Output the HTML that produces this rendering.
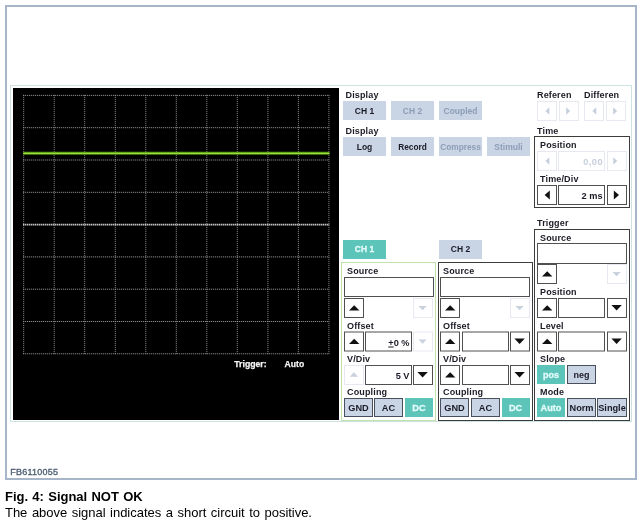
<!DOCTYPE html>
<html>
<head>
<meta charset="utf-8">
<title>Fig. 4: Signal NOT OK</title>
<style>
html,body{margin:0;padding:0;background:#fff;}
body{width:642px;height:527px;position:relative;overflow:hidden;font-family:"Liberation Sans",sans-serif;}
div{position:absolute;box-sizing:border-box;}
.frame{left:5px;top:5px;width:632px;height:475px;border:2px solid #a6b5c8;background:#fff;}
.panel{left:10px;top:85px;width:622px;height:337px;border:1px solid #cfe2e2;background:#fff;}
.scope{left:13px;top:88px;width:326px;height:332px;background:#000;}
.lbl{font-weight:bold;font-size:9px;line-height:10px;color:#1b1b26;white-space:nowrap;letter-spacing:0.15px;}
.btn{background:#c9d5e5;color:#1b1b26;font-weight:bold;font-size:8.5px;line-height:20px;height:19px;text-align:center;white-space:nowrap;}
.btn.dis{color:#8d9db6;}
.btn.on{background:#5cc4b8;color:#e2fbfa;-webkit-text-stroke:0.3px #e2fbfa;}
.btn.bd{border:1px solid #4a4f5c;line-height:18.8px;font-size:8.8px;}
.btn.lo{line-height:21px;}
.box{background:#fff;border:1px solid #505050;height:20px;}
.box.dis{border:1px solid #e6eaf0;}
.grp{border:1px solid #3c3c3c;background:#fff;}
.val{font-weight:bold;font-size:9px;line-height:20.6px;color:#1b1b26;text-align:right;padding-right:1.5px;font-size:9.2px;white-space:nowrap;}
.val.dis{color:#c5cfdc;}
svg{position:absolute;left:0;top:0;display:block;}
.cap1{left:5px;top:489.1px;font-weight:bold;font-size:13px;line-height:15px;color:#000;white-space:nowrap;letter-spacing:-0.03px;word-spacing:0.8px;}
.cap2{left:5px;top:504.6px;font-size:13px;line-height:15px;color:#000;white-space:nowrap;letter-spacing:-0.03px;word-spacing:1px;}
.fb{left:10.3px;top:467px;font-size:9px;font-weight:normal;-webkit-text-stroke:0.35px #4f6074;line-height:10px;color:#4f6074;white-space:nowrap;letter-spacing:0.22px;}
</style>
</head>
<body>
<div id="root" style="left:0;top:0;width:642px;height:527px;will-change:transform;">
<div class="frame"></div>
<div class="panel"></div>
<div class="scope">
<svg width="326" height="332" viewBox="0 0 326 332">
<g stroke-width="1" stroke-dasharray="1 1" fill="none">
<path stroke="#8c8c8c" d="M10.7 6.9V266.3M41.2 6.9V266.3M71.7 6.9V266.3M102.3 6.9V266.3M132.8 6.9V266.3M163.3 6.9V266.3M193.8 6.9V266.3M224.3 6.9V266.3M254.9 6.9V266.3M285.4 6.9V266.3M315.9 6.9V266.3"/>
<path stroke="#a4a4a4" d="M10.2 7.4H316.4M10.2 39.7H316.4M10.2 72.0H316.4M10.2 104.3H316.4M10.2 168.9H316.4M10.2 201.2H316.4M10.2 233.5H316.4M10.2 265.8H316.4"/>
</g>
<path d="M10.2 136.6H316.4" stroke="#f0f0f0" stroke-width="1.6" stroke-dasharray="1.2 0.8" fill="none"/>
<path d="M10.2 65.3H316.4" stroke="#4f9614" stroke-width="3" fill="none"/><path d="M10.2 65.3H316.4" stroke="#98dd3a" stroke-width="1.3" fill="none"/>
</svg>
<div class="lbl" style="left:221.3px;top:271.3px;color:#f4f4f4;-webkit-text-stroke:0.25px #f4f4f4;font-size:8.7px;letter-spacing:0;">Trigger:</div>
<div class="lbl" style="left:271.6px;top:271.3px;color:#f4f4f4;-webkit-text-stroke:0.25px #f4f4f4;font-size:8.6px;letter-spacing:0;">Auto</div>
</div>

<!-- top-left display buttons -->
<div class="lbl" style="left:345.5px;top:90px;">Display</div>
<div class="btn" style="left:343px;top:101px;width:43px;">CH 1</div>
<div class="btn dis" style="left:391px;top:101px;width:43px;">CH 2</div>
<div class="btn dis" style="left:439px;top:101px;width:43px;">Coupled</div>
<div class="lbl" style="left:345.5px;top:126px;">Display</div>
<div class="btn" style="left:343px;top:137px;width:43px;">Log</div>
<div class="btn" style="left:391px;top:137px;width:43px;font-size:8.3px;">Record</div>
<div class="btn dis" style="left:439px;top:137px;width:43px;font-size:8.3px;">Compress</div>
<div class="btn dis" style="left:487px;top:137px;width:43px;">Stimuli</div>

<!-- Referen / Differen -->
<div class="lbl" style="left:537px;top:90px;">Referen</div>
<div class="lbl" style="left:584px;top:90px;">Differen</div>
<div class="box dis" style="left:537px;top:101px;width:20px;"><svg width="18" height="18"><path d="M11.3 5.2v7.6l-3.9-3.8z" fill="#c5cfdc"/></svg></div>
<div class="box dis" style="left:559px;top:101px;width:20px;"><svg width="18" height="18"><path d="M6.2 5.2v7.6l3.9-3.8z" fill="#c5cfdc"/></svg></div>
<div class="box dis" style="left:584px;top:101px;width:20px;"><svg width="18" height="18"><path d="M11.3 5.2v7.6l-3.9-3.8z" fill="#c5cfdc"/></svg></div>
<div class="box dis" style="left:606px;top:101px;width:20px;"><svg width="18" height="18"><path d="M6.2 5.2v7.6l3.9-3.8z" fill="#c5cfdc"/></svg></div>

<!-- Time -->
<div class="lbl" style="left:537px;top:125.6px;">Time</div>
<div class="grp" style="left:534px;top:136px;width:96px;height:72px;"></div>
<div class="lbl" style="left:540px;top:140px;">Position</div>
<div class="box dis" style="left:537px;top:151px;width:20px;"><svg width="18" height="18"><path d="M11.3 5.2v7.6l-3.9-3.8z" fill="#c5cfdc"/></svg></div>
<div class="box dis val dis" style="left:558px;top:151px;width:47px;letter-spacing:0.45px;padding-right:1px;">0,00</div>
<div class="box dis" style="left:607px;top:151px;width:20px;"><svg width="18" height="18"><path d="M5.3 5.2v7.6l3.9-3.8z" fill="#c5cfdc"/></svg></div>
<div class="lbl" style="left:540px;top:174px;">Time/Div</div>
<div class="box" style="left:537px;top:185px;width:20px;"><svg width="18" height="18"><path d="M11.8 4.5v9l-5.2-4.5z" fill="#111"/></svg></div>
<div class="box val" style="left:558px;top:185px;width:47px;">2 ms</div>
<div class="box" style="left:607px;top:185px;width:20px;"><svg width="18" height="18"><path d="M5.8 4.5v9l5.2-4.5z" fill="#111"/></svg></div>

<!-- CH1 panel -->
<div class="btn on" style="left:343px;top:240px;width:43px;line-height:18.6px;">CH 1</div>
<div class="grp" style="left:341px;top:262px;width:95px;height:159px;border-color:#bfe3a8;"></div>
<div class="lbl" style="left:347px;top:266px;">Source</div>
<div class="box" style="left:344px;top:277px;width:90px;"></div>
<div class="box" style="left:344px;top:298px;width:20px;"><svg width="18" height="18"><path d="M4 11.6h10.4l-5.2-5.4z" fill="#111"/></svg></div>
<div class="box dis" style="left:413px;top:298px;width:20px;"><svg width="18" height="18"><path d="M4.5 6.9h8.2l-4.1 4.4z" fill="#c8d1de"/></svg></div>
<div class="lbl" style="left:347px;top:321px;">Offset</div>
<div class="box" style="left:344px;top:331px;transform:translateY(0.5px);width:20px;"><svg width="18" height="18"><path d="M4 11.6h10.4l-5.2-5.4z" fill="#111"/></svg></div>
<div class="box val" style="left:365px;top:331px;transform:translateY(0.5px);width:47px;"><u>+</u>0 %</div>
<div class="box dis" style="left:413px;top:331px;transform:translateY(0.5px);width:20px;"><svg width="18" height="18"><path d="M4.5 6.9h8.2l-4.1 4.4z" fill="#c8d1de"/></svg></div>
<div class="lbl" style="left:347px;top:353.6px;">V/Div</div>
<div class="box dis" style="left:344px;top:365px;width:20px;"><svg width="18" height="18"><path d="M4.8 10.7h8.2l-4.1-4.4z" fill="#c8d1de"/></svg></div>
<div class="box val" style="left:365px;top:365px;width:47px;">5 V</div>
<div class="box" style="left:413px;top:365px;width:20px;"><svg width="18" height="18"><path d="M3.4 6.1h10.4l-5.2 5.4z" fill="#111"/></svg></div>
<div class="lbl" style="left:347px;top:387.4px;">Coupling</div>
<div class="btn bd" style="left:344px;top:398.3px;font-size:9.2px;width:29px;">GND</div>
<div class="btn bd" style="left:374px;top:398.3px;font-size:9.2px;width:29px;">AC</div>
<div class="btn on lo" style="left:405px;top:398.3px;font-size:9.2px;width:28px;">DC</div>

<!-- CH2 panel -->
<div class="btn" style="left:439px;top:240px;width:43px;line-height:18.6px;">CH 2</div>
<div class="grp" style="left:438px;top:262px;width:95px;height:159px;"></div>
<div class="lbl" style="left:443px;top:266px;">Source</div>
<div class="box" style="left:440px;top:277px;width:90px;"></div>
<div class="box" style="left:440px;top:298px;width:20px;"><svg width="18" height="18"><path d="M4 11.6h10.4l-5.2-5.4z" fill="#111"/></svg></div>
<div class="box dis" style="left:510px;top:298px;width:20px;"><svg width="18" height="18"><path d="M4.5 6.9h8.2l-4.1 4.4z" fill="#c8d1de"/></svg></div>
<div class="lbl" style="left:443px;top:321px;">Offset</div>
<div class="box" style="left:440px;top:331px;transform:translateY(0.5px);width:20px;"><svg width="18" height="18"><path d="M4 11.6h10.4l-5.2-5.4z" fill="#111"/></svg></div>
<div class="box" style="left:462px;top:331px;transform:translateY(0.5px);width:47px;"></div>
<div class="box" style="left:510px;top:331px;transform:translateY(0.5px);width:20px;"><svg width="18" height="18"><path d="M3.4 6.1h10.4l-5.2 5.4z" fill="#111"/></svg></div>
<div class="lbl" style="left:443px;top:353.6px;">V/Div</div>
<div class="box" style="left:440px;top:365px;width:20px;"><svg width="18" height="18"><path d="M4 11.6h10.4l-5.2-5.4z" fill="#111"/></svg></div>
<div class="box" style="left:462px;top:365px;width:47px;"></div>
<div class="box" style="left:510px;top:365px;width:20px;"><svg width="18" height="18"><path d="M3.4 6.1h10.4l-5.2 5.4z" fill="#111"/></svg></div>
<div class="lbl" style="left:443px;top:387.4px;">Coupling</div>
<div class="btn bd" style="left:440px;top:398.3px;font-size:9.2px;width:29px;">GND</div>
<div class="btn bd" style="left:471px;top:398.3px;font-size:9.2px;width:29px;">AC</div>
<div class="btn on lo" style="left:501.6px;top:398.3px;font-size:9.2px;width:28px;">DC</div>

<!-- Trigger panel -->
<div class="lbl" style="left:537px;top:218px;">Trigger</div>
<div class="grp" style="left:534px;top:229px;width:96px;height:192px;"></div>
<div class="lbl" style="left:540px;top:233px;">Source</div>
<div class="box" style="left:537px;top:243px;width:90px;height:21px;"></div>
<div class="box" style="left:537px;top:264px;width:20px;"><svg width="18" height="18"><path d="M4 11.6h10.4l-5.2-5.4z" fill="#111"/></svg></div>
<div class="box dis" style="left:607px;top:264px;width:20px;"><svg width="18" height="18"><path d="M4.5 6.9h8.2l-4.1 4.4z" fill="#c8d1de"/></svg></div>
<div class="lbl" style="left:540px;top:287px;">Position</div>
<div class="box" style="left:537px;top:298px;width:20px;"><svg width="18" height="18"><path d="M4 11.6h10.4l-5.2-5.4z" fill="#111"/></svg></div>
<div class="box" style="left:558px;top:298px;width:47px;"></div>
<div class="box" style="left:607px;top:298px;width:20px;"><svg width="18" height="18"><path d="M3.4 6.1h10.4l-5.2 5.4z" fill="#111"/></svg></div>
<div class="lbl" style="left:540px;top:321px;">Level</div>
<div class="box" style="left:537px;top:331px;transform:translateY(0.5px);width:20px;"><svg width="18" height="18"><path d="M4 11.6h10.4l-5.2-5.4z" fill="#111"/></svg></div>
<div class="box" style="left:558px;top:331px;transform:translateY(0.5px);width:47px;"></div>
<div class="box" style="left:607px;top:331px;transform:translateY(0.5px);width:20px;"><svg width="18" height="18"><path d="M3.4 6.1h10.4l-5.2 5.4z" fill="#111"/></svg></div>
<div class="lbl" style="left:540px;top:354px;">Slope</div>
<div class="btn on lo" style="left:537px;top:365.2px;font-size:9px;width:28px;">pos</div>
<div class="btn bd" style="left:567px;top:365.2px;font-size:9px;width:29px;">neg</div>
<div class="lbl" style="left:540px;top:387.3px;">Mode</div>
<div class="btn on lo" style="left:537px;top:398.3px;font-size:9.2px;width:28px;">Auto</div>
<div class="btn bd" style="left:567px;top:398.3px;font-size:9.2px;width:29px;">Norm</div>
<div class="btn bd" style="left:597px;top:398.3px;font-size:9.2px;width:30px;">Single</div>

<div class="fb">FB6110055</div>
<div class="cap1">Fig. 4: Signal NOT OK</div>
<div class="cap2">The above signal indicates a short circuit to positive.</div>
</div>
</body>
</html>
